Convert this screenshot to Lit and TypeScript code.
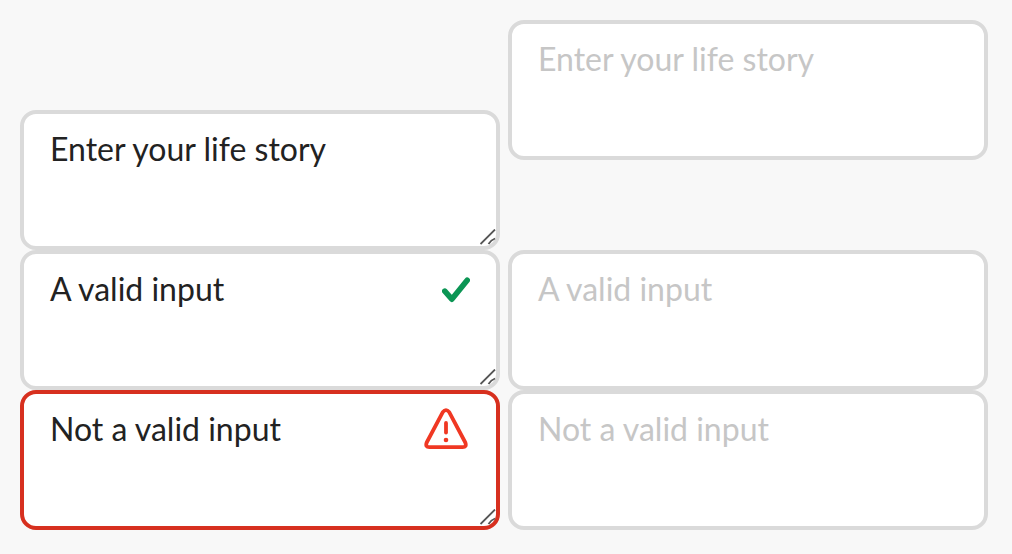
import { LitElement, html, css } from "lit";
import { customElement } from "lit/decorators.js";

@customElement("app-root")
export class AppRoot extends LitElement {
  static styles = css`
    :host {
      display: block;
      box-sizing: border-box;
      min-height: 100vh;
      padding: 20px 24px 24px 20px;
      background: #f8f8f8;
      font-family: Lato, "Noto Sans", sans-serif;
    }
    .grid {
      display: grid;
      grid-template-columns: 1fr 1fr;
      column-gap: 8px;
    }
    .first {
      margin-top: 90px;
    }
    .field {
      position: relative;
      display: flex;
      height: 140px;
    }
    .raised {
      align-self: start;
    }
    .input {
      box-sizing: border-box;
      width: 100%;
      height: 140px;
      margin: 0;
      padding: 12px 26px;
      border: 4px solid #dadada;
      border-radius: 16px;
      background: #fff;
      color: #222;
      font: 32px/46px Lato, "Noto Sans", sans-serif;
      outline: none;
      resize: none;
      overflow: hidden;
    }
    .input:disabled {
      color: #c6c6c6;
    }
    .marked {
      padding-right: 76px;
    }
    .invalid {
      border-color: #d7301f;
    }
    .grip {
      position: absolute;
      right: 4px;
      bottom: 5px;
      width: 16px;
      height: 16px;
      pointer-events: none;
    }
    .check {
      position: absolute;
      top: 26px;
      right: 30px;
    }
    .alert {
      position: absolute;
      top: 18px;
      right: 32px;
    }
  `;

  grip() {
    return html`<svg class="grip" viewBox="0 0 16 16" fill="none" stroke="#555" stroke-width="1.8" aria-hidden="true">
      <path d="M0.5 15 15 0.5M8.5 15 Q11 11 15 9.5" />
    </svg>`;
  }

  render() {
    return html`<main class="grid">
      <div class="field first">
        <textarea class="input" aria-label="Life story" .value=${"Enter your life story"}></textarea>
        ${this.grip()}
      </div>
      <div class="field raised">
        <textarea class="input" aria-label="Life story, disabled" disabled .value=${"Enter your life story"}></textarea>
      </div>
      <div class="field">
        <textarea class="input marked" aria-label="Valid input" .value=${"A valid input"}></textarea>
        <svg class="check" width="28" height="28" viewBox="0 0 28 28" fill="none" stroke="#0b9554" stroke-width="5.6" stroke-linecap="round" stroke-linejoin="round" aria-hidden="true">
          <path d="M2.8 15.2 9.8 23.2 25.2 4.2" />
        </svg>
        ${this.grip()}
      </div>
      <div class="field">
        <textarea class="input" aria-label="Valid input, disabled" disabled .value=${"A valid input"}></textarea>
      </div>
      <div class="field">
        <textarea class="input marked invalid" aria-label="Invalid input" aria-invalid="true" .value=${"Not a valid input"}></textarea>
        <svg class="alert" width="44" height="42" viewBox="0 0 44 42" fill="none" stroke="#f03823" stroke-width="3.8" stroke-linecap="round" stroke-linejoin="round" aria-hidden="true">
          <path d="M18.8 4.2 2.7 34.5Q1 39.2 5.4 39.2H38.6Q43 39.2 41.3 34.5L25.2 4.2Q22 0 18.8 4.2Z" />
          <path d="M22 15V24.5" />
          <circle cx="22" cy="32" r="2.3" fill="#f03823" stroke="none" />
        </svg>
        ${this.grip()}
      </div>
      <div class="field">
        <textarea class="input" aria-label="Invalid input, disabled" disabled .value=${"Not a valid input"}></textarea>
      </div>
    </main>`;
  }
}
